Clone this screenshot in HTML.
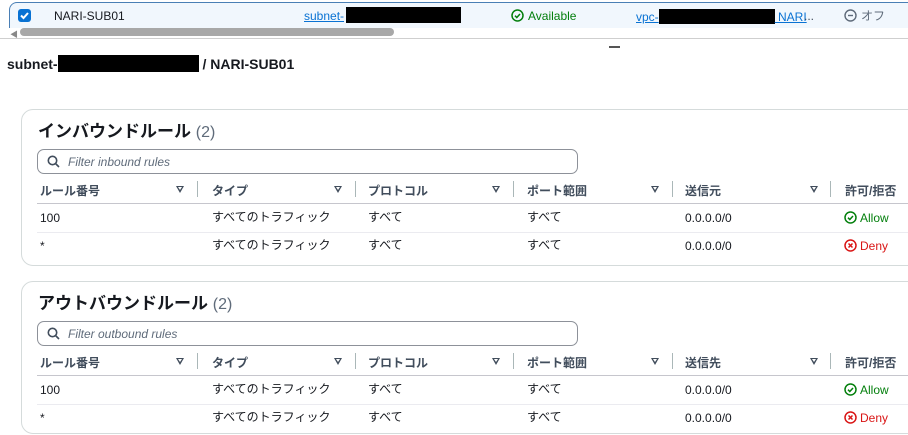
<!DOCTYPE html><html><head><meta charset="utf-8"><style>
*{margin:0;padding:0;box-sizing:border-box}
body{width:908px;height:435px;overflow:hidden;background:#fff;font-family:"Liberation Sans","Noto Sans CJK JP",sans-serif;color:#16191f;position:relative}
.a{position:absolute;white-space:nowrap}
.t{font-size:12px;line-height:14px}
.blk{position:absolute;background:#000}
.card{position:absolute;left:21px;width:900px;border:1px solid #d5dbdb;border-radius:12px;background:#fff}
.h{font-size:17px;font-weight:bold;line-height:20px}
.h span{font-weight:normal;color:#5f6b7a;font-size:16px}
.inp{position:absolute;left:37px;width:541px;height:25px;border:1px solid #8d9199;border-radius:7px}
.inp i{position:absolute;left:30px;top:5px;font-size:12px;color:#5f6b7a;font-style:italic}
.hl{position:absolute;left:37px;width:871px;height:1px;background:#c6c6cd}
.sl{position:absolute;left:37px;width:871px;height:1px;background:#ebebf0}
.dv{position:absolute;width:1px;height:16px;background:#aab7b8}
.th{font-size:12px;font-weight:bold;color:#414d5c}
.tri{position:absolute;width:0;height:0;border-left:4px solid transparent;border-right:4px solid transparent;border-top:7px solid #414d5c}
.tri:after{content:"";position:absolute;left:-2px;top:-6px;border-left:2px solid transparent;border-right:2px solid transparent;border-top:3px solid #fff}
</style></head><body>
<div style="position:absolute;left:9px;top:2px;width:910px;height:26px;border:1.5px solid #4a7fb5;border-bottom:none;border-radius:8px 0 0 0;background:#f1f7fd"></div>
<div style="position:absolute;left:18px;top:9px;width:13px;height:13px;background:#0972d3;border-radius:3px"></div>
<svg class="a" style="left:18px;top:9px" width="13" height="13"><path d="M3 6.5l2.5 2.5 4.5-5" stroke="#fff" stroke-width="2" fill="none"/></svg>
<div class="a t" style="left:54px;top:9px">NARI-SUB01</div>
<div class="a t" style="left:304px;top:9px;color:#0972d3;text-decoration:underline">subnet-</div>
<div class="blk" style="left:346px;top:7px;width:115px;height:16px"></div>
<svg class="a" style="left:511px;top:9px" width="13" height="13"><circle cx="6.5" cy="6.5" r="5.5" stroke="#037f0c" stroke-width="1.5" fill="none"/><path d="M4 6.7l1.8 1.8 3.2-3.5" stroke="#037f0c" stroke-width="1.5" fill="none"/></svg>
<div class="a t" style="left:528px;top:9px;color:#037f0c">Available</div>
<div class="a t" style="left:636px;top:9px;color:#0972d3;text-decoration:underline">vpc-<span style="display:inline-block;width:116px;height:15px;background:#000;vertical-align:-3px"></span> NARI</div>
<div class="a t" style="left:804px;top:9px;color:#414d5c">...</div>
<svg class="a" style="left:844px;top:9px" width="13" height="13"><circle cx="6.5" cy="6.5" r="5.5" stroke="#5f6b7a" stroke-width="1.4" fill="none"/><path d="M4 6.5h5" stroke="#5f6b7a" stroke-width="1.4"/></svg>
<div class="a t" style="left:861px;top:9px;color:#5f6b7a">オフ</div>
<div class="a" style="left:10px;top:29px;font-size:8px;color:#888">◀</div>
<div style="position:absolute;left:20px;top:28px;width:374px;height:8px;border-radius:4px;background:#a8a8a8"></div>
<div style="position:absolute;left:0;top:38px;width:908px;height:1px;background:#cfcfcf"></div>
<div style="position:absolute;left:609px;top:46px;width:11px;height:2px;background:#555"></div>
<div class="a" style="left:7px;top:55px;font-size:14px;font-weight:bold;line-height:17px">subnet-<span style="display:inline-block;width:141px;height:17px;background:#000;vertical-align:-3px"></span> / NARI-SUB01</div>

<div class="card" style="top:109px;height:157px"></div>
<div class="card" style="top:281px;height:153px"></div>

<div class="a h" style="left:38px;top:122px">インバウンドルール <span>(2)</span></div>
<div class="inp" style="top:149px"><i>Filter inbound rules</i></div>
<svg class="a" style="left:47px;top:155px" width="13" height="13"><circle cx="5.5" cy="5.5" r="4.2" stroke="#414d5c" stroke-width="1.6" fill="none"/><path d="M8.5 8.5l3.5 3.5" stroke="#414d5c" stroke-width="1.6"/></svg>
<div class="hl" style="top:203px"></div><div class="sl" style="top:232px"></div>

<div class="a h" style="left:38px;top:294px">アウトバウンドルール <span>(2)</span></div>
<div class="inp" style="top:321px"><i>Filter outbound rules</i></div>
<svg class="a" style="left:47px;top:327px" width="13" height="13"><circle cx="5.5" cy="5.5" r="4.2" stroke="#414d5c" stroke-width="1.6" fill="none"/><path d="M8.5 8.5l3.5 3.5" stroke="#414d5c" stroke-width="1.6"/></svg>
<div class="hl" style="top:375px"></div><div class="sl" style="top:404px"></div>

<div class="a th" style="left:40px;top:182px">ルール番号</div>
<div class="a th" style="left:212px;top:182px">タイプ</div>
<div class="a th" style="left:368px;top:182px">プロトコル</div>
<div class="a th" style="left:527px;top:182px">ポート範囲</div>
<div class="a th" style="left:685px;top:182px">送信元</div>
<div class="a th" style="left:845px;top:182px">許可/拒否</div>
<div class="a th" style="left:40px;top:354px">ルール番号</div>
<div class="a th" style="left:212px;top:354px">タイプ</div>
<div class="a th" style="left:368px;top:354px">プロトコル</div>
<div class="a th" style="left:527px;top:354px">ポート範囲</div>
<div class="a th" style="left:685px;top:354px">送信先</div>
<div class="a th" style="left:845px;top:354px">許可/拒否</div>

<div class="tri" style="left:176px;top:186px"></div><div class="dv" style="left:197px;top:181px"></div>
<div class="tri" style="left:334px;top:186px"></div><div class="dv" style="left:355px;top:181px"></div>
<div class="tri" style="left:492px;top:186px"></div><div class="dv" style="left:513px;top:181px"></div>
<div class="tri" style="left:651px;top:186px"></div><div class="dv" style="left:672px;top:181px"></div>
<div class="tri" style="left:810px;top:186px"></div><div class="dv" style="left:830px;top:181px"></div>
<div class="tri" style="left:176px;top:358px"></div><div class="dv" style="left:197px;top:353px"></div>
<div class="tri" style="left:334px;top:358px"></div><div class="dv" style="left:355px;top:353px"></div>
<div class="tri" style="left:492px;top:358px"></div><div class="dv" style="left:513px;top:353px"></div>
<div class="tri" style="left:651px;top:358px"></div><div class="dv" style="left:672px;top:353px"></div>
<div class="tri" style="left:810px;top:358px"></div><div class="dv" style="left:830px;top:353px"></div>

<div class="a t" style="left:40px;top:211px">100</div>
<div class="a t" style="left:40px;top:239px">*</div>
<div class="a t" style="left:40px;top:383px">100</div>
<div class="a t" style="left:40px;top:411px">*</div>
<div class="a t" style="left:212px;top:210px">すべてのトラフィック</div>
<div class="a t" style="left:212px;top:238px">すべてのトラフィック</div>
<div class="a t" style="left:212px;top:382px">すべてのトラフィック</div>
<div class="a t" style="left:212px;top:410px">すべてのトラフィック</div>
<div class="a t" style="left:368px;top:210px">すべて</div><div class="a t" style="left:527px;top:210px">すべて</div>
<div class="a t" style="left:368px;top:238px">すべて</div><div class="a t" style="left:527px;top:238px">すべて</div>
<div class="a t" style="left:368px;top:382px">すべて</div><div class="a t" style="left:527px;top:382px">すべて</div>
<div class="a t" style="left:368px;top:410px">すべて</div><div class="a t" style="left:527px;top:410px">すべて</div>
<div class="a t" style="left:685px;top:211px">0.0.0.0/0</div>
<div class="a t" style="left:685px;top:239px">0.0.0.0/0</div>
<div class="a t" style="left:685px;top:383px">0.0.0.0/0</div>
<div class="a t" style="left:685px;top:411px">0.0.0.0/0</div>

<svg class="a" style="left:844px;top:211px" width="13" height="13"><circle cx="6.5" cy="6.5" r="5.5" stroke="#037f0c" stroke-width="1.5" fill="none"/><path d="M4 6.7l1.8 1.8 3.2-3.5" stroke="#037f0c" stroke-width="1.5" fill="none"/></svg>
<div class="a t" style="left:860px;top:211px;color:#037f0c">Allow</div>
<svg class="a" style="left:844px;top:239px" width="13" height="13"><circle cx="6.5" cy="6.5" r="5.5" stroke="#d91515" stroke-width="1.5" fill="none"/><path d="M4.5 4.5l4 4M8.5 4.5l-4 4" stroke="#d91515" stroke-width="1.5"/></svg>
<div class="a t" style="left:860px;top:239px;color:#d91515">Deny</div>
<svg class="a" style="left:844px;top:383px" width="13" height="13"><circle cx="6.5" cy="6.5" r="5.5" stroke="#037f0c" stroke-width="1.5" fill="none"/><path d="M4 6.7l1.8 1.8 3.2-3.5" stroke="#037f0c" stroke-width="1.5" fill="none"/></svg>
<div class="a t" style="left:860px;top:383px;color:#037f0c">Allow</div>
<svg class="a" style="left:844px;top:411px" width="13" height="13"><circle cx="6.5" cy="6.5" r="5.5" stroke="#d91515" stroke-width="1.5" fill="none"/><path d="M4.5 4.5l4 4M8.5 4.5l-4 4" stroke="#d91515" stroke-width="1.5"/></svg>
<div class="a t" style="left:860px;top:411px;color:#d91515">Deny</div>
</body></html>
